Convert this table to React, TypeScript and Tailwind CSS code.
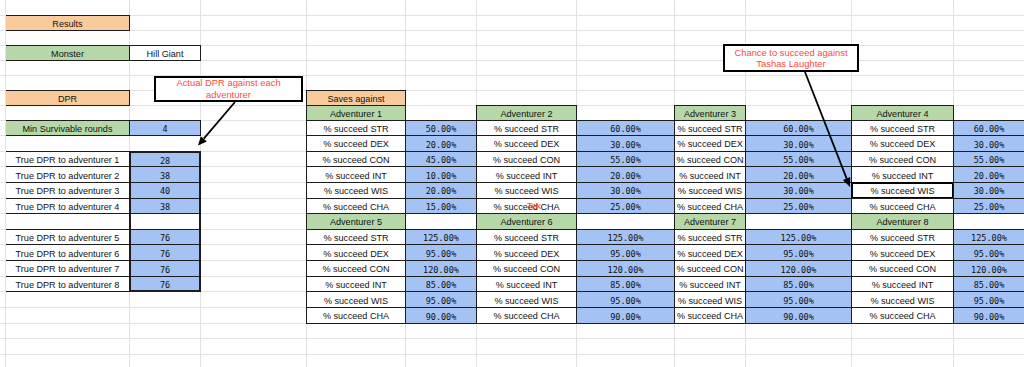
import React from "react";

type CellSpec = { t?: string; cls: string };

const ORANGE = "bg-[#f9cb9c]";
const GREEN = "bg-[#b6d7a8]";
const BLUE = "bg-[#a4c2f4]";
const BOX = "-m-px border border-[#1d1d1d]";
const BOXA = "-my-px -mr-px border-y border-r border-[#1d1d1d]";
const HEADNEXT = "-mb-px -mx-px border-b border-x border-[#1d1d1d]";
const MONO = "font-['DejaVu_Sans_Mono',monospace] text-[8.5px]";
const BASE =
  "flex items-center justify-center overflow-hidden whitespace-nowrap leading-none text-[#111] pt-[3px]";

const ROWS = 24;
const COLS = 12;

function buildCells(): Record<string, CellSpec> {
  const cells: Record<string, CellSpec> = {};
  const set = (r: number, c: number, t: string, cls: string) => {
    cells[`${r}-${c}`] = { t, cls };
  };

  // Left side
  set(1, 1, "Results", `${ORANGE} ${BOXA}`);
  set(3, 1, "Monster", `${GREEN} ${BOXA}`);
  set(3, 2, "Hill Giant", `bg-white ${BOX}`);
  set(6, 1, "DPR", `${ORANGE} ${BOXA}`);
  set(8, 1, "Min Survivable rounds", `${GREEN} ${BOXA}`);
  set(8, 2, "4", `${BLUE} ${BOX} ${MONO}`);

  const dpr = [28, 38, 40, 38, 76, 76, 76, 76];
  const dprRows = [10, 11, 12, 13, 15, 16, 17, 18];
  dprRows.forEach((r, i) => {
    set(r, 1, `True DPR to adventurer ${i + 1}`, `bg-white ${BOXA}`);
    let cls = `${BLUE} -m-px border-x-2 border-y border-[#1d1d1d] ${MONO}`;
    if (r === 10) cls = `${BLUE} -m-px border-x-2 border-t-2 border-b border-[#1d1d1d] ${MONO}`;
    if (r === 18) cls = `${BLUE} -m-px border-x-2 border-t border-b-2 border-[#1d1d1d] ${MONO}`;
    set(r, 2, String(dpr[i]), cls);
  });
  set(14, 2, "", "bg-white -m-px border-x-2 border-y border-[#1d1d1d]");

  // Right side
  set(6, 4, "Saves against", `${ORANGE} ${BOX}`);
  const stats = ["STR", "DEX", "CON", "INT", "WIS", "CHA"];
  const low = [
    [50, 20, 45, 10, 20, 15],
    [60, 30, 55, 20, 30, 25],
    [60, 30, 55, 20, 30, 25],
    [60, 30, 55, 20, 30, 25],
  ];
  const high = [125, 95, 120, 85, 95, 90];
  [7, 14].forEach((hr) => {
    const base = hr === 7 ? 1 : 5;
    for (let j = 0; j < 4; j++) {
      const lc = 4 + 2 * j;
      const vc = 5 + 2 * j;
      set(hr, lc, `Adventurer ${base + j}`, `${GREEN} ${BOX}`);
      set(hr, vc, "", hr === 7 ? `bg-white ${HEADNEXT}` : `bg-white ${BOX}`);
      for (let i = 0; i < 6; i++) {
        const r = hr + 1 + i;
        const v = hr === 7 ? low[j][i] : high[i];
        const labelCls =
          r === 12 && lc === 10
            ? "bg-white -m-px border-2 border-black"
            : `bg-white ${BOX}`;
        set(r, lc, `% succeed ${stats[i]}`, labelCls);
        set(r, vc, `${v.toFixed(2)}%`, `${BLUE} ${BOX} ${MONO}`);
      }
    }
  });
  return cells;
}

const CELLS = buildCells();

export default function App() {
  const items: React.ReactNode[] = [];
  for (let r = 0; r < ROWS; r++) {
    for (let c = 0; c < COLS; c++) {
      const cell = CELLS[`${r}-${c}`];
      items.push(
        <div key={`${r}-${c}`} className={`${BASE} ${cell ? cell.cls : "bg-white"}`}>
          {cell?.t}
        </div>
      );
    }
  }

  return (
    <div className="relative w-[1024px] h-[367px] overflow-hidden bg-white font-['Liberation_Sans',Arial,sans-serif] text-[9.1px]">
      <div className="grid w-full gap-px bg-[#e2e2e2] grid-cols-[5px_123px_70px_105px_98px_70px_99px_97px_70px_105px_101px_1fr] grid-rows-[15px_repeat(8,14px)_repeat(15,14.65px)]">
        {items}
      </div>

      <svg
        className="absolute left-0 top-0 pointer-events-none"
        width={1024}
        height={367}
        viewBox="0 0 1024 367"
      >
        <line x1={235} y1={102} x2={203.8} y2={138.7} stroke="#000" strokeWidth={1.8} />
        <polygon points="198,145.5 206.8,141.4 200.8,136.3" fill="#000" />
        <line x1={805} y1={72} x2={846.7} y2={178.6} stroke="#000" strokeWidth={1.8} />
        <polygon points="850,187 842.9,179.9 850.3,177.0" fill="#000" />
      </svg>

      <div className="absolute left-[154px] top-[76px] w-[149px] h-[26px] border-2 border-black bg-white flex flex-col items-center justify-center text-[9.4px] leading-[11.7px] text-[#ff4a3d]">
        <span>Actual DPR against each</span>
        <span>adventurer</span>
      </div>

      <div className="absolute left-[723px] top-[44px] w-[136px] h-[28px] border-2 border-black bg-white flex flex-col items-center justify-center text-[9.4px] leading-[11px] text-[#ff4a3d]">
        <span>Chance to succeed against</span>
        <span>Tashas Laughter</span>
      </div>

      <span className="absolute left-[527px] top-[202px] text-[9px] leading-[9px] text-[#ff4433]">
        Tex
      </span>
    </div>
  );
}
